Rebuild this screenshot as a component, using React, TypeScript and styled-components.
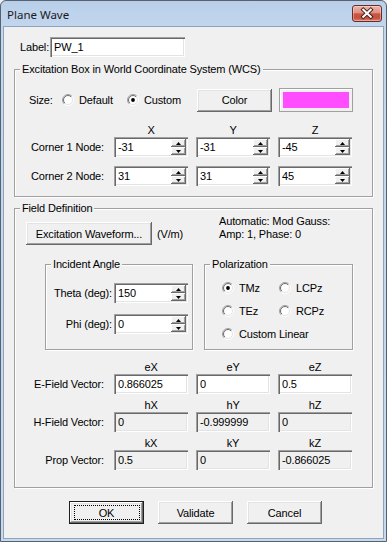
import React from 'react';
import styled, { createGlobalStyle } from 'styled-components';

const GlobalStyle = createGlobalStyle`
  html, body {
    margin: 0;
    padding: 0;
    background: #f0f0f0;
  }
  body {
    font-family: "Liberation Sans", Arial, sans-serif;
    font-size: 11px;
    letter-spacing: -0.15px;
    color: #000;
  }
  * { box-sizing: border-box; }
`;

const Radio: React.FC<{ checked?: boolean }> = ({ checked }) => (
  <svg width="12" height="12" viewBox="0 0 12 12">
    <defs>
      <linearGradient id="rOuter" x1="0" y1="0" x2="1" y2="1">
        <stop offset="0.45" stopColor="#a0a0a0" />
        <stop offset="0.55" stopColor="#ffffff" />
      </linearGradient>
      <linearGradient id="rInner" x1="0" y1="0" x2="1" y2="1">
        <stop offset="0.45" stopColor="#696969" />
        <stop offset="0.55" stopColor="#e3e3e3" />
      </linearGradient>
    </defs>
    <circle cx="6" cy="6" r="5.5" fill="none" stroke="url(#rOuter)" strokeWidth="1" />
    <circle cx="6" cy="6" r="4.5" fill="#fff" stroke="url(#rInner)" strokeWidth="1" />
    {checked && <circle cx="6" cy="6" r="1.9" fill="#000" />}
  </svg>
);

const Arrow: React.FC<{ down?: boolean }> = ({ down }) => (
  <svg width="5" height="3" viewBox="0 0 5 3">
    <polygon points={down ? '0,0 5,0 2.5,3' : '2.5,0 5,3 0,3'} fill="#000" />
  </svg>
);

const SpinField: React.FC<{ value: string; width?: number }> = ({ value, width = 74 }) => (
  <SpinBox $w={width}>
    <SpinInput defaultValue={value} />
    <SpinButtons>
      <SpinHalf><Arrow /></SpinHalf>
      <SpinHalf><Arrow down /></SpinHalf>
    </SpinButtons>
  </SpinBox>
);

const Option: React.FC<{ label: string; checked?: boolean; width?: number }> = ({ label, checked, width }) => (
  <RadioOption $w={width}>
    <Radio checked={checked} />
    <span>{label}</span>
  </RadioOption>
);

const vectors = [
  { label: 'E-Field Vector:', heads: ['eX', 'eY', 'eZ'], values: ['0.866025', '0', '0.5'], disabled: false },
  { label: 'H-Field Vector:', heads: ['hX', 'hY', 'hZ'], values: ['0', '-0.999999', '0'], disabled: true },
  { label: 'Prop Vector:', heads: ['kX', 'kY', 'kZ'], values: ['0.5', '0', '-0.866025'], disabled: true },
];

export default function App() {
  return (
    <>
      <GlobalStyle />
      <Window>
        <TitleBar>
          <Title>Plane Wave</Title>
          <CloseButton>
            <svg width="30" height="15" viewBox="0 0 30 15">
              <path d="M11 3.5 L19 11 M19 3.5 L11 11" stroke="#4b1c17" strokeWidth="4.2" strokeLinecap="square" />
              <path d="M11 3.5 L19 11 M19 3.5 L11 11" stroke="#ffffff" strokeWidth="2.2" strokeLinecap="square" />
            </svg>
          </CloseButton>
        </TitleBar>
        <Client>
          <LabelRow>
            <span>Label:</span>
            <TextBox $w={135} $pad={4} defaultValue="PW_1" />
          </LabelRow>

          <Group $mt={12} $pt={18} $pb={10}>
            <Caption>Excitation Box in World Coordinate System (WCS)</Caption>
            <SizeRow>
              <SizeLabel>Size:</SizeLabel>
              <Option label="Default" width={65} />
              <Option label="Custom" checked width={70} />
              <Button $w={75}>Color</Button>
              <Swatch><SwatchColor /></Swatch>
            </SizeRow>
            <FieldGrid $mt={11} $head>
              <span />
              <Head>X</Head>
              <Head>Y</Head>
              <Head>Z</Head>
            </FieldGrid>
            <FieldGrid>
              <RowLabel>Corner 1 Node:</RowLabel>
              <SpinField value="-31" />
              <SpinField value="-31" />
              <SpinField value="-45" />
            </FieldGrid>
            <FieldGrid $mt={9}>
              <RowLabel>Corner 2 Node:</RowLabel>
              <SpinField value="31" />
              <SpinField value="31" />
              <SpinField value="45" />
            </FieldGrid>
          </Group>

          <Group $mt={11} $pt={6} $pb={17}>
            <Caption>Field Definition</Caption>
            <WaveRow>
              <WaveControl>
                <Button $w={126}>Excitation Waveform...</Button>
                <span>(V/m)</span>
              </WaveControl>
              <Info>
                Automatic: Mod Gauss:
                <br />
                Amp: 1, Phase: 0
              </Info>
            </WaveRow>

            <SubRow>
              <SubGroup $w={148}>
                <Caption>Incident Angle</Caption>
                <AngleGrid>
                  <RowLabel>Theta (deg):</RowLabel>
                  <SpinField value="150" />
                  <RowLabel>Phi (deg):</RowLabel>
                  <SpinField value="0" />
                </AngleGrid>
              </SubGroup>
              <SubGroup $w={149}>
                <Caption>Polarization</Caption>
                <PolarGrid>
                  <Option label="TMz" checked />
                  <Option label="LCPz" />
                  <Option label="TEz" />
                  <Option label="RCPz" />
                  <Wide><Option label="Custom Linear" /></Wide>
                </PolarGrid>
              </SubGroup>
            </SubRow>

            {vectors.map((v, i) => (
              <VectorBlock key={v.label} $mt={i === 0 ? 10 : 4}>
                <FieldGrid $head>
                  <span />
                  {v.heads.map((h) => <Head key={h}>{h}</Head>)}
                </FieldGrid>
                <FieldGrid>
                  <RowLabel>{v.label}</RowLabel>
                  {v.values.map((val, j) => (
                    <TextBox key={j} $w={74} $pad={4} $disabled={v.disabled} readOnly={v.disabled} defaultValue={val} />
                  ))}
                </FieldGrid>
              </VectorBlock>
            ))}
          </Group>

          <ButtonRow>
            <Button $w={75} $default>OK</Button>
            <Button $w={75}>Validate</Button>
            <Button $w={75}>Cancel</Button>
          </ButtonRow>
        </Client>
      </Window>
    </>
  );
}

const Window = styled.div`
    width: 387px;
    height: 542px;
    display: flex;
    flex-direction: column;
    border: 1px solid #57626f;
    border-radius: 6px 6px 0 0;
    background: linear-gradient(#b9cfe9, #c2d6ee 26px, #c6d9ef);
    overflow: hidden;
  `,
  TitleBar = styled.div`
    height: 25px;
    flex: none;
    display: flex;
    align-items: center;
    justify-content: space-between;
    padding: 0 4px 0 6px;
  `,
  Title = styled.div`
    font-family: "Noto Sans", "Liberation Sans", sans-serif;
    font-size: 11.5px;
    letter-spacing: 0;
    color: #1b1b1b;
    padding-top: 2px;
  `,
  CloseButton = styled.div`
    width: 30px;
    height: 17px;
    display: flex;
    align-items: center;
    justify-content: center;
    border: 1px solid #6e2b24;
    border-radius: 3px;
    background: linear-gradient(#ebb3a8 0%, #de9284 45%, #c95644 52%, #c65141 80%, #d8826f 100%);
    box-shadow: inset 0 0 0 1px rgba(255, 255, 255, 0.35);
  `,
  Client = styled.div`
    flex: 1;
    margin: 0 2px 2px;
    border: 1px solid #8fa3bc;
    background: #f0f0f0;
    display: flex;
    flex-direction: column;
    padding-top: 10px;
  `,
  LabelRow = styled.div`
    display: flex;
    align-items: center;
    gap: 1px;
    height: 20px;
    flex: none;
    padding-left: 16px;
  `,
  TextBox = styled.input<{ $w: number; $pad?: number; $disabled?: boolean }>`
    width: ${(p) => p.$w}px;
    height: 20px;
    border: none;
    outline: none;
    margin: 0;
    padding: 0 2px 0 ${(p) => p.$pad ?? 3}px;
    font: inherit;
    letter-spacing: inherit;
    color: #000;
    background: ${(p) => (p.$disabled ? '#f0f0f0' : '#fff')};
    box-shadow: inset 1px 1px 0 #a0a0a0, inset 2px 2px 0 #696969, inset -1px -1px 0 #fff, inset -2px -2px 0 #e3e3e3;
  `,
  Group = styled.div<{ $mt: number; $pt: number; $pb: number }>`
    position: relative;
    flex: none;
    margin: ${(p) => p.$mt}px 10px 0;
    padding: ${(p) => p.$pt}px 0 ${(p) => p.$pb}px;
    border: 1px solid #a0a0a0;
    box-shadow: inset 1px 1px 0 #fff, 1px 1px 0 #fff;
  `,
  Caption = styled.span`
    position: absolute;
    top: -7px;
    left: 5px;
    padding: 0 2px;
    line-height: 13px;
    background: #f0f0f0;
    white-space: nowrap;
  `,
  SizeRow = styled.div`
    display: flex;
    align-items: center;
    height: 24px;
    padding-left: 14px;
  `,
  SizeLabel = styled.span`
    width: 33px;
  `,
  RadioOption = styled.label<{ $w?: number }>`
    display: inline-flex;
    align-items: center;
    gap: 5px;
    width: ${(p) => (p.$w ? `${p.$w}px` : 'auto')};
    height: 16px;
    white-space: nowrap;
  `,
  Button = styled.button<{ $w: number; $default?: boolean }>`
    position: relative;
    width: ${(p) => p.$w}px;
    height: 23px;
    margin: 0;
    padding: 0;
    font: inherit;
    letter-spacing: inherit;
    color: #000;
    background: #f0f0f0;
    border: ${(p) => (p.$default ? '1px solid #1e1e1e' : 'none')};
    box-shadow: inset -1px -1px 0 #696969, inset 1px 1px 0 #fff, inset -2px -2px 0 #a0a0a0, inset 2px 2px 0 #e3e3e3;
    ${(p) =>
      p.$default &&
      `&::after {
        content: '';
        position: absolute;
        inset: 3px 3px 3px 4px;
        border: 1px dotted #000;
      }`}
  `,
  Swatch = styled.div`
    width: 74px;
    height: 24px;
    margin-left: 7px;
    padding: 3px;
    border: 1px solid #a0a0a0;
    box-shadow: inset 1px 1px 0 #fff;
  `,
  SwatchColor = styled.div`
    width: 100%;
    height: 100%;
    background: #ff4dff;
  `,
  FieldGrid = styled.div<{ $mt?: number; $head?: boolean }>`
    display: grid;
    grid-template-columns: 91px repeat(3, 74px);
    column-gap: 8px;
    align-items: center;
    margin-top: ${(p) => p.$mt ?? 0}px;
    height: ${(p) => (p.$head ? 14 : 20)}px;
  `,
  Head = styled.span`
    text-align: center;
    line-height: 13px;
  `,
  RowLabel = styled.span`
    text-align: right;
    padding-right: 2px;
    white-space: nowrap;
  `,
  SpinBox = styled.div<{ $w: number }>`
    width: ${(p) => p.$w}px;
    height: 20px;
    display: flex;
    padding: 2px;
    background: #fff;
    box-shadow: inset 1px 1px 0 #a0a0a0, inset 2px 2px 0 #696969, inset -1px -1px 0 #fff, inset -2px -2px 0 #e3e3e3;
  `,
  SpinInput = styled.input`
    flex: 1;
    min-width: 0;
    border: none;
    outline: none;
    padding: 0 0 0 2px;
    margin: 0;
    font: inherit;
    letter-spacing: inherit;
    background: transparent;
  `,
  SpinButtons = styled.div`
    width: 15px;
    display: flex;
    flex-direction: column;
  `,
  SpinHalf = styled.div`
    flex: 1;
    display: flex;
    align-items: center;
    justify-content: center;
    background: #f0f0f0;
    box-shadow: inset -1px -1px 0 #696969, inset 1px 1px 0 #fff, inset -2px -2px 0 #a0a0a0;
  `,
  WaveRow = styled.div`
    display: flex;
    align-items: flex-start;
    padding-left: 11px;
  `,
  WaveControl = styled.div`
    width: 193px;
    margin-top: 7px;
    display: flex;
    align-items: center;
    gap: 5px;
  `,
  Info = styled.div`
    line-height: 13px;
  `,
  SubRow = styled.div`
    display: flex;
    gap: 11px;
    margin-top: 19px;
    padding-left: 30px;
  `,
  SubGroup = styled.div<{ $w: number }>`
    position: relative;
    width: ${(p) => p.$w}px;
    height: 86px;
    border: 1px solid #a0a0a0;
    box-shadow: inset 1px 1px 0 #fff, 1px 1px 0 #fff;
  `,
  AngleGrid = styled.div`
    display: grid;
    grid-template-columns: 68px 74px;
    grid-auto-rows: 20px;
    row-gap: 11px;
    align-items: center;
    padding-top: 18px;
  `,
  PolarGrid = styled.div`
    display: grid;
    grid-template-columns: 57px auto;
    grid-auto-rows: 16px;
    row-gap: 7px;
    padding: 15px 0 0 17px;
  `,
  Wide = styled.div`
    grid-column: 1 / span 2;
  `,
  VectorBlock = styled.div<{ $mt: number }>`
    margin-top: ${(p) => p.$mt}px;
  `,
  ButtonRow = styled.div`
    display: flex;
    flex: none;
    gap: 14px;
    margin-top: 13px;
    padding-left: 65px;
  `;
